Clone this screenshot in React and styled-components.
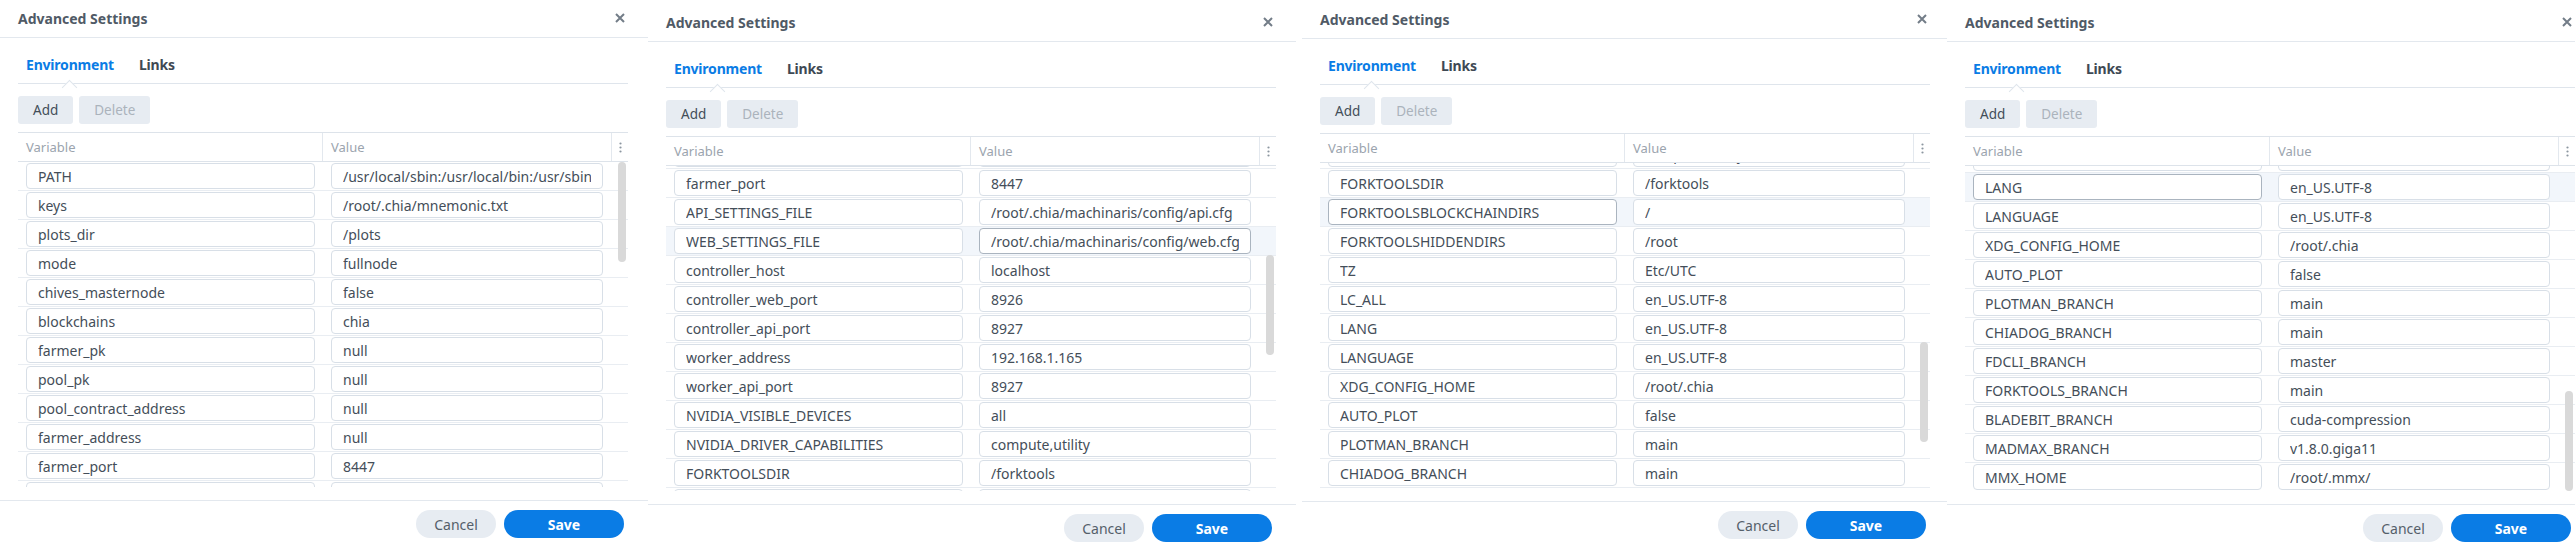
import React from 'react';
import styled, { createGlobalStyle, css } from 'styled-components';

const GlobalStyle = createGlobalStyle`
  html, body { margin: 0; padding: 0; background: #fff; overflow: hidden; }
  body { font-family: "Noto Sans", "Liberation Sans", sans-serif; -webkit-font-smoothing: antialiased; }
  * { box-sizing: border-box; }
`;

const Stage = styled.div`
  display: flex;
  align-items: flex-start;
  width: 2575px;
  height: 559px;
  overflow: hidden;
  background: #fff;
`;

const Panel = styled.section`
  flex: 0 0 648px;
  width: 648px;
  margin-left: ${(p) => p.$dx}px;
  margin-top: ${(p) => p.$dy}px;
  display: flex;
  flex-direction: column;
  background: #fff;
`;

const Header = styled.header`
  height: 38px;
  border-bottom: 1px solid #e3e8ee;
  display: flex;
  align-items: center;
  justify-content: space-between;
  padding: 0 23px 1px 18px;
`;

const Title = styled.h2`
  margin: 0;
  font-size: 14px;
  font-weight: 700;
  color: #505a66;
  letter-spacing: 0;
`;

const CloseButton = styled.button`
  border: 0;
  background: none;
  padding: 0;
  width: 10px;
  height: 10px;
  display: flex;
  color: #737d88;
`;

const Body = styled.div`
  padding: 0 20px 0 18px;
  display: flex;
  flex-direction: column;
`;

const TabBar = styled.nav`
  height: 46px;
  padding-top: 7px;
  display: flex;
  align-items: center;
  gap: 25px;
  padding-left: 8px;
  border-bottom: 1px solid #dfe5ec;
`;

const Tab = styled.span`
  position: relative;
  font-size: 14px;
  font-weight: 700;
  letter-spacing: -0.2px;
  color: ${(p) => (p.$active ? '#0a7ce5' : '#3e4954')};
  ${(p) =>
    p.$active &&
    css`
      &::after {
        content: '';
        position: absolute;
        left: 50%;
        bottom: -19px;
        width: 10px;
        height: 10px;
        margin-left: -6px;
        background: #fff;
        border-top: 1px solid #dfe5ec;
        border-left: 1px solid #dfe5ec;
        transform: rotate(45deg);
      }
    `}
`;

const Toolbar = styled.div`
  display: flex;
  gap: 6px;
  margin-top: 12px;
`;

const ToolButton = styled.button`
  height: 28px;
  padding: 0 15px;
  border: 0;
  border-radius: 3px;
  background: #e7ecf2;
  font-family: inherit;
  font-size: 13.5px;
  color: ${(p) => (p.disabled ? '#abb3bc' : '#424d58')};
`;

const Table = styled.div`
  margin-top: 8px;
  border-top: 1px solid #dde3ea;
`;

const cols = css`
  display: grid;
  grid-template-columns: 304px 289px 17px;
`;

const HeadRow = styled.div`
  ${cols};
  height: 29px;
  border-bottom: 1px solid #dde3ea;
`;

const HeadCell = styled.div`
  display: flex;
  align-items: center;
  padding-left: ${(p) => (p.$menu ? 0 : 8)}px;
  justify-content: ${(p) => (p.$menu ? 'center' : 'flex-start')};
  border-left: ${(p) => (p.$first ? 'none' : '1px solid #e3e8ee')};
  font-size: 13px;
  color: #9ba4ae;
`;

const Viewport = styled.div`
  position: relative;
  height: 325px;
  overflow: hidden;
`;

const RowList = styled.div`
  margin-top: ${(p) => -p.$scroll}px;
`;

const Row = styled.div`
  ${cols};
  padding: 1px 0;
  border-bottom: 1px solid #e9edf2;
  background: ${(p) => (p.$hover ? '#f2f6fb' : 'transparent')};
`;

const Field = styled.input`
  display: block;
  height: 26px;
  width: auto;
  min-width: 0;
  margin: ${(p) => (p.$value ? '0 8px 0 9px' : '0 7px 0 8px')};
  padding: 0 11px;
  border: 1px solid ${(p) => (p.$active ? '#aab4bf' : '#d8dfe7')};
  border-radius: 4px;
  background: #fff;
  font-family: inherit;
  font-size: 14px;
  color: #444e59;
  outline: none;
`;

const Thumb = styled.div`
  position: absolute;
  right: 2px;
  width: 8px;
  height: 100px;
  border-radius: 4px;
  background: #d9d9d9;
`;

const Footer = styled.footer`
  margin-top: 13px;
  border-top: 1px solid #e3e8ee;
  padding: 9px 24px 0 0;
  display: flex;
  justify-content: flex-end;
  gap: 8px;
`;

const FooterButton = styled.button`
  height: 28px;
  width: ${(p) => (p.$primary ? 120 : 80)}px;
  border: 0;
  border-radius: 14px;
  font-family: inherit;
  font-size: 14px;
  font-weight: ${(p) => (p.$primary ? 700 : 400)};
  background: ${(p) => (p.$primary ? '#0a7ce5' : '#e7ecf2')};
  color: ${(p) => (p.$primary ? '#fff' : '#555f6a')};
`;

const CloseIcon = () => (
  <svg width="10" height="10" viewBox="0 0 10 10">
    <path d="M1 1 L9 9 M9 1 L1 9" stroke="currentColor" strokeWidth="2" strokeLinecap="butt" />
  </svg>
);

const DotsIcon = () => (
  <svg width="3" height="11" viewBox="0 0 3 11">
    <circle cx="1.5" cy="1.5" r="1.1" fill="#8c96a0" />
    <circle cx="1.5" cy="5.5" r="1.1" fill="#8c96a0" />
    <circle cx="1.5" cy="9.5" r="1.1" fill="#8c96a0" />
  </svg>
);

const ENV = [
  ['PATH', '/usr/local/sbin:/usr/local/bin:/usr/sbin:/usr/bin:/sbin:/bin'],
  ['keys', '/root/.chia/mnemonic.txt'],
  ['plots_dir', '/plots'],
  ['mode', 'fullnode'],
  ['chives_masternode', 'false'],
  ['blockchains', 'chia'],
  ['farmer_pk', 'null'],
  ['pool_pk', 'null'],
  ['pool_contract_address', 'null'],
  ['farmer_address', 'null'],
  ['farmer_port', '8447'],
  ['API_SETTINGS_FILE', '/root/.chia/machinaris/config/api.cfg'],
  ['WEB_SETTINGS_FILE', '/root/.chia/machinaris/config/web.cfg'],
  ['controller_host', 'localhost'],
  ['controller_web_port', '8926'],
  ['controller_api_port', '8927'],
  ['worker_address', '192.168.1.165'],
  ['worker_api_port', '8927'],
  ['NVIDIA_VISIBLE_DEVICES', 'all'],
  ['NVIDIA_DRIVER_CAPABILITIES', 'compute,utility'],
  ['FORKTOOLSDIR', '/forktools'],
  ['FORKTOOLSBLOCKCHAINDIRS', '/'],
  ['FORKTOOLSHIDDENDIRS', '/root'],
  ['TZ', 'Etc/UTC'],
  ['LC_ALL', 'en_US.UTF-8'],
  ['LANG', 'en_US.UTF-8'],
  ['LANGUAGE', 'en_US.UTF-8'],
  ['XDG_CONFIG_HOME', '/root/.chia'],
  ['AUTO_PLOT', 'false'],
  ['PLOTMAN_BRANCH', 'main'],
  ['CHIADOG_BRANCH', 'main'],
  ['FDCLI_BRANCH', 'master'],
  ['FORKTOOLS_BRANCH', 'main'],
  ['BLADEBIT_BRANCH', 'cuda-compression'],
  ['MADMAX_BRANCH', 'v1.8.0.giga11'],
  ['MMX_HOME', '/root/.mmx/'],
];

const PANELS = [
  { dx: 0, dy: 0, start: 0, count: 12, scroll: 0, thumb: 0, hover: -1, focus: null },
  { dx: 0, dy: 4, start: 9, count: 13, scroll: 26, thumb: 89, hover: 12, focus: 'value' },
  { dx: 6, dy: 1, start: 19, count: 13, scroll: 23, thumb: 179, hover: 21, focus: 'name' },
  { dx: -3, dy: 4, start: 24, count: 12, scroll: 22, thumb: 225, hover: 25, focus: 'name' },
];

function SettingsPanel({ cfg }) {
  const rows = ENV.slice(cfg.start, cfg.start + cfg.count);
  return (
    <Panel $dx={cfg.dx} $dy={cfg.dy}>
      <Header>
        <Title>Advanced Settings</Title>
        <CloseButton aria-label="Close">
          <CloseIcon />
        </CloseButton>
      </Header>
      <Body>
        <TabBar>
          <Tab $active>Environment</Tab>
          <Tab>Links</Tab>
        </TabBar>
        <Toolbar>
          <ToolButton>Add</ToolButton>
          <ToolButton disabled>Delete</ToolButton>
        </Toolbar>
        <Table>
          <HeadRow>
            <HeadCell $first>Variable</HeadCell>
            <HeadCell>Value</HeadCell>
            <HeadCell $menu>
              <DotsIcon />
            </HeadCell>
          </HeadRow>
          <Viewport>
            <RowList $scroll={cfg.scroll}>
              {rows.map(([name, value], i) => {
                const idx = cfg.start + i;
                const hover = idx === cfg.hover;
                return (
                  <Row key={name} $hover={hover}>
                    <Field readOnly value={name} $active={hover && cfg.focus === 'name'} />
                    <Field readOnly value={value} $value $active={hover && cfg.focus === 'value'} />
                    <span />
                  </Row>
                );
              })}
            </RowList>
            <Thumb style={{ top: cfg.thumb }} />
          </Viewport>
        </Table>
      </Body>
      <Footer>
        <FooterButton>Cancel</FooterButton>
        <FooterButton $primary>Save</FooterButton>
      </Footer>
    </Panel>
  );
}

export default function App() {
  return (
    <>
      <GlobalStyle />
      <Stage>
        {PANELS.map((cfg, i) => (
          <SettingsPanel key={i} cfg={cfg} />
        ))}
      </Stage>
    </>
  );
}
